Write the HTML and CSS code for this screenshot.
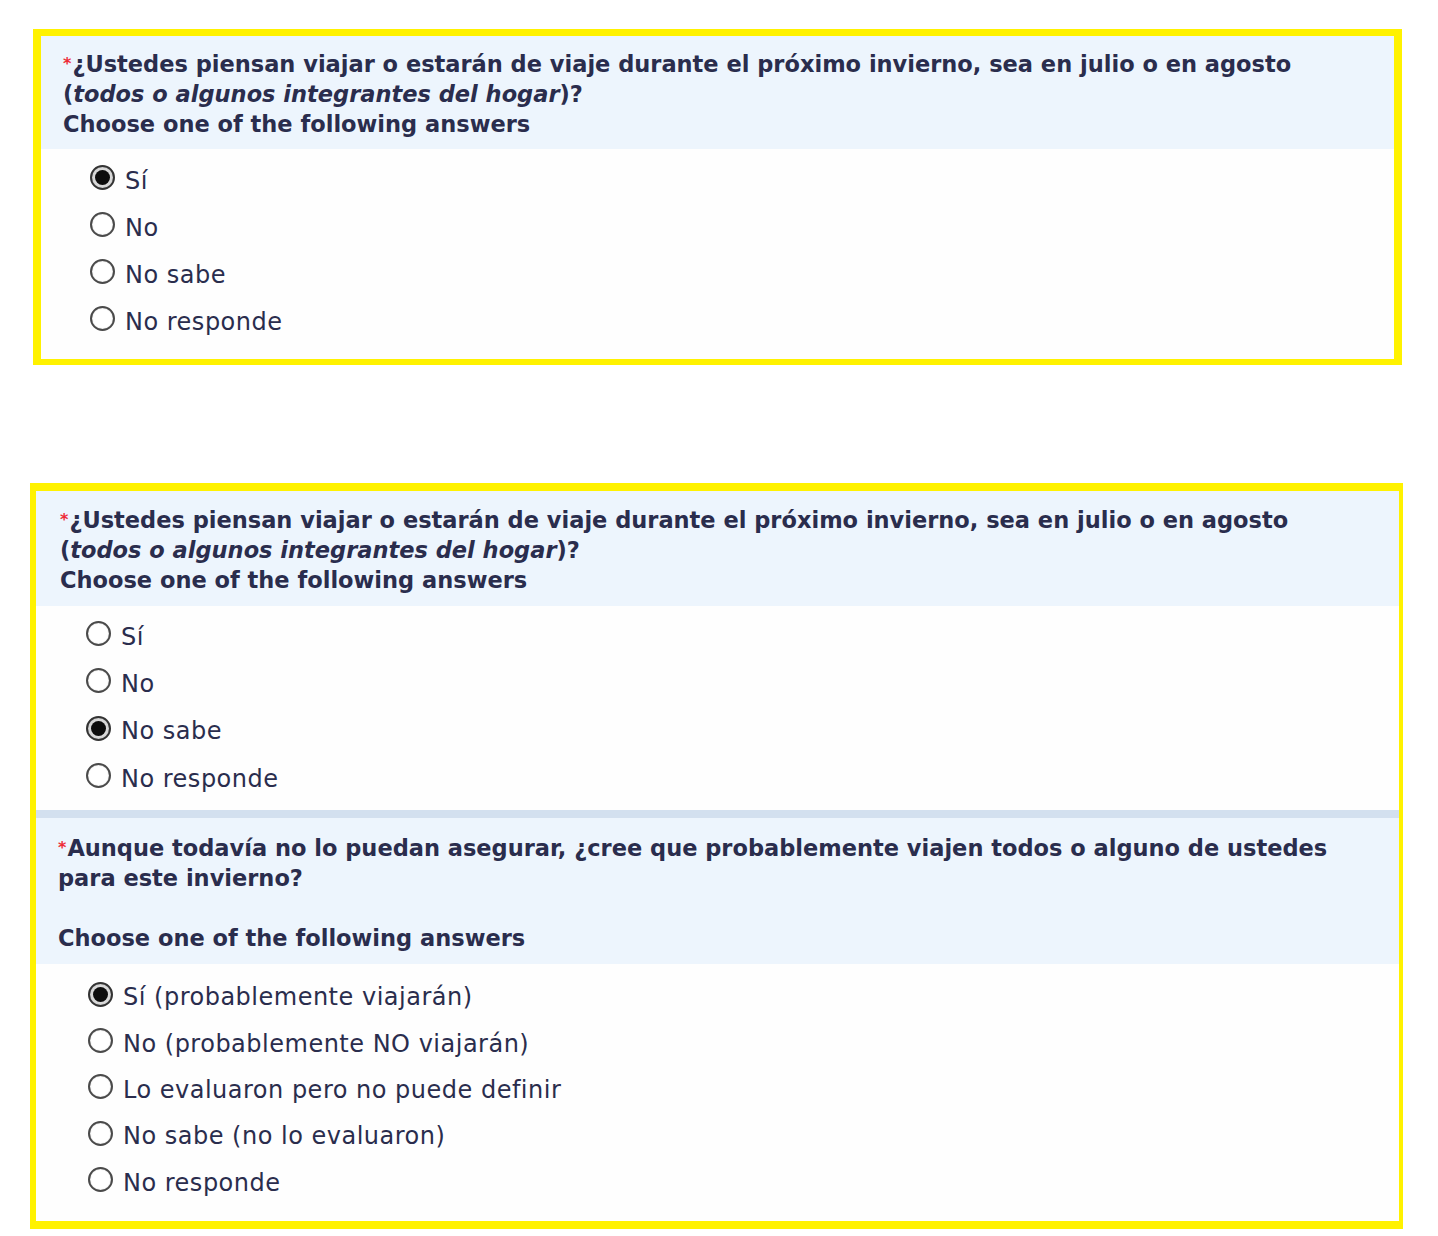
FILE: index.html
```html
<!DOCTYPE html>
<html lang="es">
<head>
<meta charset="utf-8">
<title>Encuesta</title>
<link rel="stylesheet" href="styles.css">
</head>
<body>
<div class="page">
  <section class="box box-first">
    <div class="question">
      <div class="q-text"><span class="req">*</span>¿Ustedes piensan viajar o estarán de viaje durante el próximo invierno, sea en julio o en agosto<br>(<em>todos o algunos integrantes del hogar</em>)?</div>
      <div class="q-help">Choose one of the following answers</div>
    </div>
    <ul class="answers answers-a">
      <li class="answer"><span class="radio checked"></span><span class="label">Sí</span></li>
      <li class="answer"><span class="radio"></span><span class="label">No</span></li>
      <li class="answer"><span class="radio"></span><span class="label">No sabe</span></li>
      <li class="answer"><span class="radio"></span><span class="label">No responde</span></li>
    </ul>
  </section>

  <section class="box box-second">
    <div class="question question-main">
      <div class="q-text"><span class="req">*</span>¿Ustedes piensan viajar o estarán de viaje durante el próximo invierno, sea en julio o en agosto<br>(<em>todos o algunos integrantes del hogar</em>)?</div>
      <div class="q-help">Choose one of the following answers</div>
    </div>
    <ul class="answers answers-b">
      <li class="answer"><span class="radio"></span><span class="label">Sí</span></li>
      <li class="answer"><span class="radio"></span><span class="label">No</span></li>
      <li class="answer"><span class="radio checked"></span><span class="label">No sabe</span></li>
      <li class="answer"><span class="radio"></span><span class="label">No responde</span></li>
    </ul>
    <div class="question question-follow">
      <div class="q-text"><span class="req">*</span>Aunque todavía no lo puedan asegurar, ¿cree que probablemente viajen todos o alguno de ustedes<br>para este invierno?</div>
      <div class="q-help q-help-spaced">Choose one of the following answers</div>
    </div>
    <ul class="answers answers-c">
      <li class="answer"><span class="radio checked"></span><span class="label">Sí (probablemente viajarán)</span></li>
      <li class="answer"><span class="radio"></span><span class="label">No (probablemente NO viajarán)</span></li>
      <li class="answer"><span class="radio"></span><span class="label">Lo evaluaron pero no puede definir</span></li>
      <li class="answer"><span class="radio"></span><span class="label">No sabe (no lo evaluaron)</span></li>
      <li class="answer"><span class="radio"></span><span class="label">No responde</span></li>
    </ul>
  </section>
</div>
</body>
</html>
```

FILE: styles.css
```css
html, body {
  margin: 0;
  padding: 0;
  background: #ffffff;
}

body {
  font-family: "DejaVu Sans", Verdana, sans-serif;
  color: #2a2d4d;
}

.page {
  padding: 29px 0 0 30px;
}

.box {
  border: 7px solid #fff200;
  background: #fefefe;
  box-sizing: border-box;
}

.box-first {
  width: 1369px;
  margin-left: 3px;
  border-width: 7px 8px 6px 8px;
}

.box-second {
  width: 1373px;
  margin-top: 118px;
  border-width: 8px 4px 8px 6px;
}

.question {
  background: #edf5fd;
  padding: 13px 22px 10px 22px;
  font-weight: bold;
  font-size: 22.5px;
  line-height: 30px;
}

.question-main {
  padding: 14px 22px 11px 24px;
}

.question-follow {
  border-top: 8px solid #d3e0ef;
  padding: 15px 22px 11px 22px;
}

.q-text em {
  font-style: italic;
}

.req {
  color: #ee2b36;
  font-size: 16px;
  vertical-align: 3px;
  margin-right: 1px;
}

.q-help-spaced {
  margin-top: 30px;
}

.answers {
  list-style: none;
  margin: 0;
  padding: 8px 0 14px 49px;
}

.answers-b {
  padding: 7px 0 8px 50px;
}

.answers-c {
  padding: 10px 0 15px 52px;
}

.answer {
  display: flex;
  align-items: center;
  height: 47px;
  font-size: 24px;
  letter-spacing: 0.5px;
}

.answers-b .answer {
  height: 47.3px;
}

.answers-c .answer {
  height: 46.3px;
}

.radio {
  flex: none;
  width: 21px;
  height: 21px;
  border: 2px solid #4a4a4a;
  border-radius: 50%;
  background: #ffffff;
  margin-right: 10px;
  margin-top: -6px;
  position: relative;
  box-shadow: inset 0 0 1px #999;
}

.radio.checked {
  border-color: #333;
  background: #d9d9d9;
}

.radio.checked::after {
  content: "";
  position: absolute;
  left: 3px;
  top: 3px;
  width: 15px;
  height: 15px;
  border-radius: 50%;
  background: #0d0d0d;
}

.label {
  white-space: nowrap;
}
```
